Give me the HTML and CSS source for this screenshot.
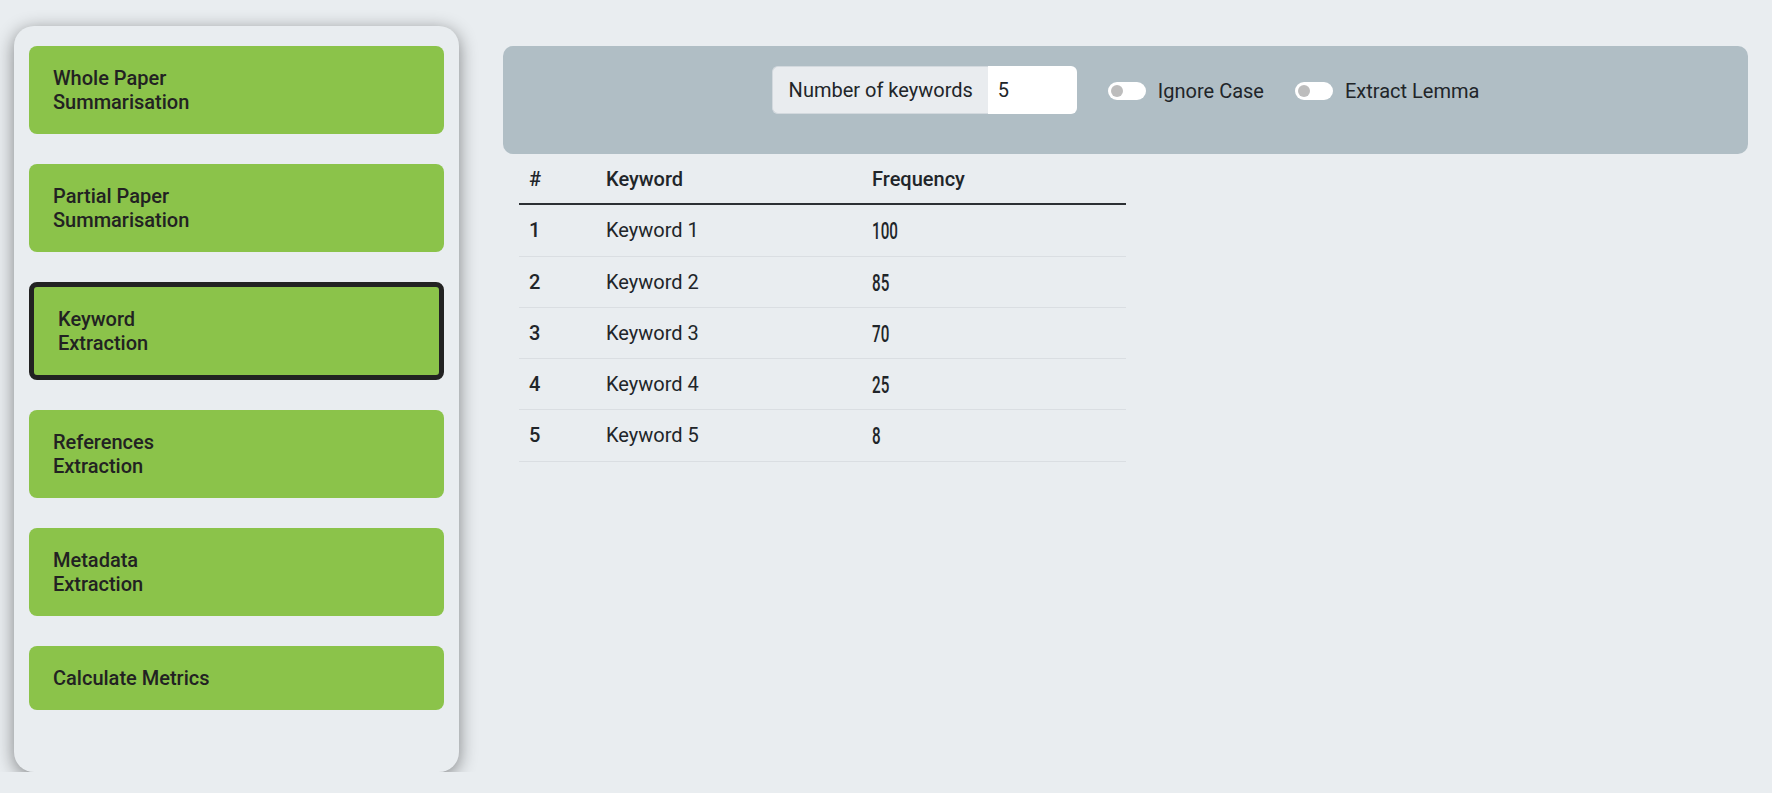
FILE: index.html
```html
<!DOCTYPE html>
<html lang="en">
<head>
<meta charset="utf-8">
<title>Keyword Extraction</title>
<link rel="stylesheet" href="styles.css">
</head>
<body>
<div class="app">
  <aside class="sidebar">
    <button class="nav-btn">Whole Paper<br>Summarisation</button>
    <button class="nav-btn">Partial Paper<br>Summarisation</button>
    <button class="nav-btn is-active">Keyword<br>Extraction</button>
    <button class="nav-btn">References<br>Extraction</button>
    <button class="nav-btn">Metadata<br>Extraction</button>
    <button class="nav-btn">Calculate Metrics</button>
  </aside>
  <main class="main">
    <div class="toolbar">
      <div class="input-group">
        <span class="input-label">Number of keywords</span>
        <input class="input-num" type="text" value="5">
      </div>
      <label class="switch">
        <span class="switch-track"><span class="switch-knob"></span></span>
        <span class="switch-text">Ignore Case</span>
      </label>
      <label class="switch">
        <span class="switch-track"><span class="switch-knob"></span></span>
        <span class="switch-text">Extract Lemma</span>
      </label>
    </div>
    <table class="kw-table">
      <colgroup>
        <col class="col-idx">
        <col class="col-kw">
        <col class="col-freq">
      </colgroup>
      <thead>
        <tr><th>#</th><th>Keyword</th><th>Frequency</th></tr>
      </thead>
      <tbody>
        <tr><th>1</th><td>Keyword 1</td><td><span class="freq">100</span></td></tr>
        <tr><th>2</th><td>Keyword 2</td><td><span class="freq">85</span></td></tr>
        <tr><th>3</th><td>Keyword 3</td><td><span class="freq">70</span></td></tr>
        <tr><th>4</th><td>Keyword 4</td><td><span class="freq">25</span></td></tr>
        <tr><th>5</th><td>Keyword 5</td><td><span class="freq">8</span></td></tr>
      </tbody>
    </table>
  </main>
</div>
</body>
</html>
```

FILE: styles.css
```css
* { box-sizing: border-box; }

html, body {
  margin: 0;
  padding: 0;
  background: #e9edf0;
  font-family: Roboto, "Liberation Sans", sans-serif;
  color: #212529;
}

.app {
  display: flex;
  align-items: flex-start;
  padding: 26px 24px 0 14px;
}

.sidebar {
  flex: none;
  width: 445px;
  display: flex;
  flex-direction: column;
  gap: 30px;
  padding: 20px 15px 62px;
  background: #e9edf0;
  border-radius: 20px;
  box-shadow: 0 4px 18px rgba(0, 0, 0, 0.45);
}

.nav-btn {
  display: block;
  width: 100%;
  margin: 0;
  padding: 20px 24px;
  border: none;
  border-radius: 8px;
  background: #8bc34a;
  color: #222;
  font-family: Roboto, "Liberation Sans", sans-serif;
  font-size: 20px;
  font-weight: 500;
  line-height: 24px;
  text-align: left;
}

.nav-btn.is-active {
  border: 5px solid #222;
}

.main {
  flex: 1;
  min-width: 0;
  margin-left: 44px;
  padding-top: 20px;
}

.toolbar {
  display: flex;
  justify-content: center;
  align-items: center;
  padding: 20px 20px 40px;
  background: #b0bec5;
  border-radius: 10px;
}

.input-group {
  display: flex;
  height: 48px;
}

.input-label {
  display: flex;
  align-items: center;
  padding: 0 15px 0 16px;
  background: #e9ecef;
  border: 1px solid #d3d9de;
  border-right: none;
  border-radius: 6px 0 0 6px;
  font-size: 20px;
  color: #212529;
}

.input-num {
  width: 89px;
  height: 48px;
  margin: 0;
  padding: 0 10px;
  border: none;
  border-radius: 0 6px 6px 0;
  background: #fff;
  font-family: Roboto, "Liberation Sans", sans-serif;
  font-size: 20px;
  color: #212529;
  outline: none;
}

.switch {
  display: flex;
  align-items: center;
  gap: 12px;
  margin-left: 31px;
  padding-top: 2px;
}

.switch-track {
  display: flex;
  align-items: center;
  width: 38px;
  height: 18px;
  padding: 0 3px;
  background: #fff;
  border-radius: 9px;
}

.switch-knob {
  width: 12px;
  height: 12px;
  border-radius: 50%;
  background: #bdbdbd;
}

.switch-text {
  font-size: 20px;
  color: #212529;
}

.kw-table {
  width: 607px;
  margin-left: 16px;
  border-collapse: collapse;
  table-layout: fixed;
  font-size: 20px;
  line-height: 24.25px;
  color: #212529;
}

.col-idx { width: 77px; }
.col-kw { width: 266px; }
.col-freq { width: 264px; }

.kw-table th,
.kw-table td {
  padding: 13px 10px;
  text-align: left;
  vertical-align: middle;
}

.kw-table th {
  font-weight: 500;
}

.kw-table td {
  font-weight: 400;
}

.kw-table thead th {
  padding-bottom: 12px;
  border-bottom: 2px solid #2c3034;
}

.kw-table tbody tr {
  border-bottom: 1px solid #dadee2;
}

.freq {
  display: inline-block;
  position: relative;
  top: 2px;
  font-family: Roboto, "Liberation Sans", sans-serif;
  font-size: 23px;
  font-weight: 500;
  line-height: 20px;
  transform: scaleX(0.66);
  transform-origin: left center;
}
```
